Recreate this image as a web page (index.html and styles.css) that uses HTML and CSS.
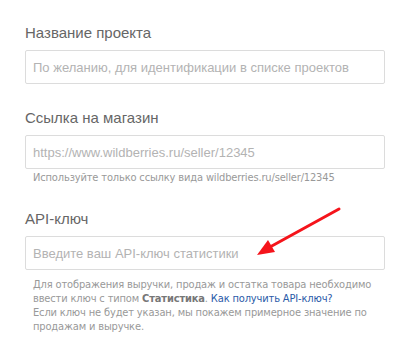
FILE: index.html
```html
<!DOCTYPE html>
<html lang="ru">
<head>
<meta charset="utf-8">
<link rel="stylesheet" href="styles.css">
</head>
<body>
<form class="form">
  <div class="field">
    <label class="label">Название проекта</label>
    <input class="input" type="text" placeholder="По желанию, для идентификации в списке проектов">
  </div>
  <div class="field">
    <label class="label">Ссылка на магазин</label>
    <input class="input" type="text" placeholder="https://www.wildberries.ru/seller/12345">
    <p class="hint">Используйте только ссылку вида wildberries.ru/seller/12345</p>
  </div>
  <div class="field field-api">
    <label class="label">API-ключ</label>
    <input class="input" type="text" placeholder="Введите ваш API-ключ статистики">
    <p class="hint">Для отображения выручки, продаж и остатка товара необходимо ввести ключ с типом <b class="strong">Статистика</b>. <a class="link" href="#">Как получить API-ключ?</a><br>Если ключ не будет указан, мы покажем примерное значение по продажам и выручке.</p>
    <svg class="arrow" width="100" height="60" viewBox="0 0 100 60">
      <line x1="89" y1="6" x2="20" y2="44" stroke="#f5141b" stroke-width="3" stroke-linecap="round"/>
      <polygon points="7,52 18,37 25,49" fill="#f5141b"/>
    </svg>
  </div>
</form>
</body>
</html>
```
FILE: styles.css
```css
* { box-sizing: border-box; }
html, body { margin: 0; padding: 0; background: #fff; }
body {
  font-family: "Liberation Sans", Arial, sans-serif;
  width: 408px;
  height: 354px;
  overflow: hidden;
}
.form {
  padding: 24px 23px 0 25px;
  display: flex;
  flex-direction: column;
  gap: 25px;
}
.field {
  display: flex;
  flex-direction: column;
  position: relative;
}
.label {
  font-size: 15px;
  line-height: 18px;
  color: #666;
  margin-bottom: 8px;
}
.input {
  width: 360px;
  height: 34px;
  border: 1px solid #dcdcdc;
  border-radius: 2px;
  padding: 0 7px;
  font-family: "Liberation Sans", Arial, sans-serif;
  font-size: 13px;
  color: #555;
  outline: none;
}
.input::placeholder { color: #b3b3b3; }
.hint {
  margin: 2px 0 0 8px;
  font-family: "DejaVu Sans Condensed", "DejaVu Sans", sans-serif;
  font-size: 11px;
  letter-spacing: -0.15px;
  line-height: 14px;
  color: #999;
}
.strong { font-weight: bold; color: #777; }
.link { color: #2a5aa8; text-decoration: none; }
.field-api .hint { margin-top: 8px; width: 352px; }
.arrow {
  position: absolute;
  left: 225px;
  top: -7px;
}
```
